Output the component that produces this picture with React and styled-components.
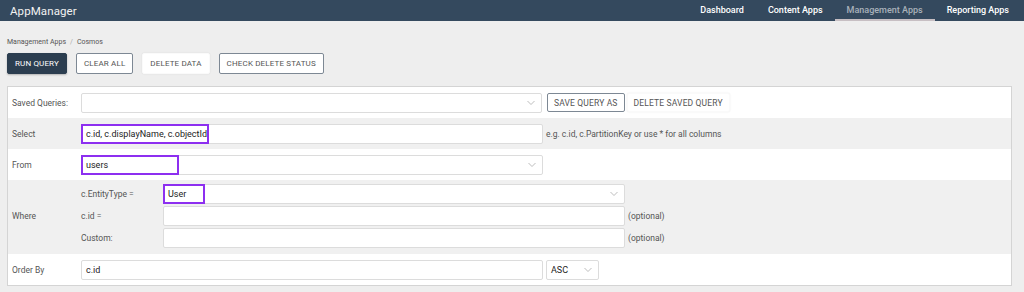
import React from "react";
import styled, { createGlobalStyle } from "styled-components";

const Global = createGlobalStyle`
  html, body { margin: 0; padding: 0; background: #eeeeee; }
  body { font-family: Roboto, "Liberation Sans", Arial, sans-serif; color: #444; }
  * { box-sizing: border-box; }
`;

const Header = styled.header`
  height: 21px;
  background: #34495e;
  display: flex;
  align-items: center;
  justify-content: space-between;
  padding: 0 3px 0 10px;
`;

const Brand = styled.div`
  color: #f2f2f2;
  font-size: 11.5px;
  letter-spacing: 0.1px;
`;

const Nav = styled.nav`
  display: flex;
  height: 100%;
`;

const NavItem = styled.a`
  display: flex;
  align-items: center;
  height: 100%;
  padding: 1px 12px 0;
  font-size: 9px;
  font-weight: 500;
  color: ${(p) => (p.$active ? "#a9b1ba" : "#ffffff")};
  border-bottom: 2px solid ${(p) => (p.$active ? "#c7bfc3" : "transparent")};
`;

const Content = styled.main`
  padding: 0 12px 0 7px;
`;

const Breadcrumb = styled.div`
  margin-top: 17px;
  font-size: 7px;
  color: #555;
  height: 9px;
  line-height: 9px;
  span { color: #aaa; margin: 0 4px; }
`;

const Toolbar = styled.div`
  display: flex;
  gap: 9px;
  margin-top: 6px;
`;

const Button = styled.button`
  height: ${(p) => (p.$small ? "19px" : "21px")};
  padding: 0 ${(p) => (p.$small ? "6px" : "7px")};
  font-family: inherit;
  font-size: ${(p) => (p.$small ? "8.5px" : "8px")};
  letter-spacing: 0.15px;
  border-radius: 2px;
  cursor: pointer;
  white-space: nowrap;
  ${(p) =>
    p.$variant === "primary"
      ? `background: #2c3e50; color: #fff; border: 1px solid #2c3e50; box-shadow: 0 1px 2px rgba(0,0,0,0.25);`
      : p.$variant === "plain"
      ? `background: #fff; color: #555; border: 1px solid #fafafa; box-shadow: 0 0 2px rgba(0,0,0,0.08);`
      : `background: #fff; color: #555; border: 1px solid #7d8894;`}
`;

const Panel = styled.section`
  margin-top: 12px;
  background: #fff;
  border: 1px solid #d4d4d4;
`;

const Row = styled.div`
  display: grid;
  grid-template-columns: 73px 1fr;
  align-items: center;
  background: ${(p) => (p.$gray ? "#f0f0f0" : "#fff")};
  min-height: 31px;
  padding: ${(p) => p.$pad || "0"};
`;

const Label = styled.div`
  padding-left: 4px;
  font-size: 8.5px;
  color: #555;
`;

const Fields = styled.div`
  display: flex;
  align-items: center;
  gap: ${(p) => p.$gap || "3px"};
`;

const FieldBox = styled.div`
  position: relative;
  width: ${(p) => p.$w || 462}px;
  height: 20px;
  background: #fff;
  border: 1px solid #dcdcdc;
  border-radius: 2px;
  display: flex;
  align-items: center;
  padding: 0 4px;
  font-size: 9px;
  color: #222;
`;

const Highlight = styled.span`
  position: absolute;
  left: -1px;
  top: -1px;
  bottom: -1px;
  border: 2px solid #8d2ff0;
  pointer-events: none;
`;

const Chevron = styled.svg`
  position: absolute;
  right: 6px;
  top: 6px;
`;

const Hint = styled.span`
  font-size: 8.5px;
  color: #555;
  white-space: nowrap;
`;

const WhereGrid = styled.div`
  display: grid;
  grid-template-columns: 82px auto;
  row-gap: 2px;
  align-items: center;
`;

const SubLabel = styled.div`
  font-size: 8.5px;
  color: #555;
`;

const ChevronIcon = () => (
  <Chevron width="8" height="6" viewBox="0 0 8 6">
    <path d="M0.5 1 L4 4.5 L7.5 1" fill="none" stroke="#b5b5b5" strokeWidth="0.9" />
  </Chevron>
);

const Field = ({ value, w, highlight, select }) => (
  <FieldBox $w={w}>
    {highlight && <Highlight style={{ width: highlight }} />}
    {value}
    {select && <ChevronIcon />}
  </FieldBox>
);

export default function App() {
  return (
    <>
      <Global />
      <Header>
        <Brand>AppManager</Brand>
        <Nav>
          <NavItem>Dashboard</NavItem>
          <NavItem>Content Apps</NavItem>
          <NavItem $active>Management Apps</NavItem>
          <NavItem>Reporting Apps</NavItem>
        </Nav>
      </Header>
      <Content>
        <Breadcrumb>
          Management Apps<span>/</span>Cosmos
        </Breadcrumb>
        <Toolbar>
          <Button $variant="primary">RUN QUERY</Button>
          <Button>CLEAR ALL</Button>
          <Button $variant="plain">DELETE DATA</Button>
          <Button>CHECK DELETE STATUS</Button>
        </Toolbar>
        <Panel>
          <Row>
            <Label>Saved Queries:</Label>
            <Fields $gap="2px">
              <Field w={461} select />
              <Button $small style={{ marginLeft: 3 }}>SAVE QUERY AS</Button>
              <Button $small $variant="plain">DELETE SAVED QUERY</Button>
            </Fields>
          </Row>
          <Row $gray>
            <Label>Select</Label>
            <Fields>
              <Field value="c.id, c.displayName, c.objectId" highlight={128} />
              <Hint>e.g. c.id, c.PartitionKey or use * for all columns</Hint>
            </Fields>
          </Row>
          <Row>
            <Label>From</Label>
            <Fields>
              <Field value="users" highlight={98} select />
            </Fields>
          </Row>
          <Row $gray $pad="4px 0 6px">
            <Label>Where</Label>
            <WhereGrid>
              <SubLabel>c.EntityType =</SubLabel>
              <Fields>
                <Field value="User" highlight={42} select />
              </Fields>
              <SubLabel>c.id =</SubLabel>
              <Fields>
                <Field />
                <Hint>(optional)</Hint>
              </Fields>
              <SubLabel>Custom:</SubLabel>
              <Fields>
                <Field />
                <Hint>(optional)</Hint>
              </Fields>
            </WhereGrid>
          </Row>
          <Row>
            <Label>Order By</Label>
            <Fields>
              <Field value="c.id" />
              <Field value="ASC" w={53} select />
            </Fields>
          </Row>
        </Panel>
      </Content>
    </>
  );
}
